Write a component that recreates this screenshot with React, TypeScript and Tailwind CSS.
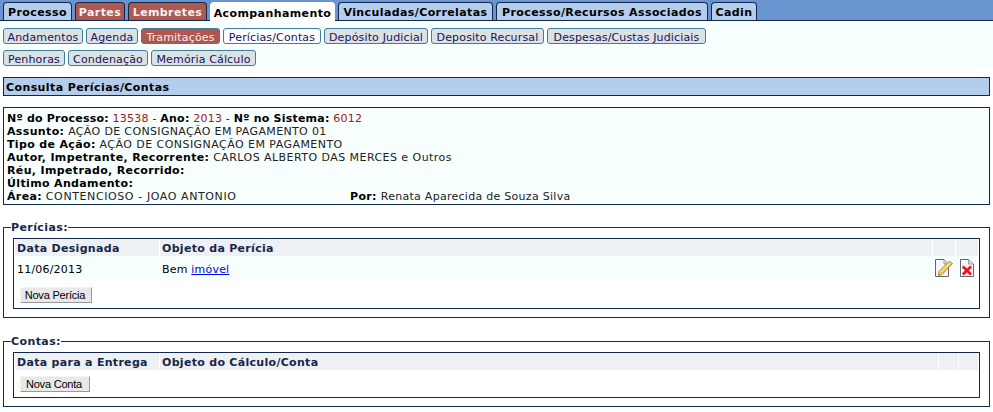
const mainTabs = [
  { label: 'Processo', w: 'w-[69px]', kind: 'plain' },
  { label: 'Partes', w: 'w-[50px]', kind: 'alert' },
  { label: 'Lembretes', w: 'w-[79px]', kind: 'alert' },
  { label: 'Acompanhamento', w: 'w-[125px]', kind: 'active' },
  { label: 'Vinculadas/Correlatas', w: 'w-[155px]', kind: 'plain' },
  { label: 'Processo/Recursos Associados', w: 'w-[212px]', kind: 'plain' },
  { label: 'Cadin', w: 'w-[46px]', kind: 'plain' },
];

const subTabsOne = [
  { label: 'Andamentos', w: 'w-[80px]', kind: 'plain' },
  { label: 'Agenda', w: 'w-[52px]', kind: 'plain' },
  { label: 'Tramitações', w: 'w-[79px]', kind: 'alert' },
  { label: 'Perícias/Contas', w: 'w-[98px]', kind: 'active' },
  { label: 'Depósito Judicial', w: 'w-[104px]', kind: 'plain' },
  { label: 'Deposito Recursal', w: 'w-[113px]', kind: 'plain' },
  { label: 'Despesas/Custas Judiciais', w: 'w-[159px]', kind: 'plain' },
];

const subTabsTwo = [
  { label: 'Penhoras', w: 'w-[62px]', kind: 'plain' },
  { label: 'Condenação', w: 'w-[80px]', kind: 'plain' },
  { label: 'Memória Cálculo', w: 'w-[105px]', kind: 'plain' },
];

function MainTab({ label, w, kind }: { label: string; w: string; kind: string }) {
  let colors = 'bg-[#b5cdec] text-black border-[#12284a] h-[18px]';
  if (kind === 'alert') colors = 'bg-[#ad5850] text-[#f7f3ee] border-[#12284a] h-[18px]';
  if (kind === 'active') colors = 'bg-white text-black border-white h-[19px] -mb-px';
  return (
    <div className={`${w} ${colors} shrink-0 border border-b-0 rounded-t-[4px] pt-[4px] flex items-center justify-center text-[11px] font-bold tracking-[0.4px]`}>
      {label}
    </div>
  );
}

function SubTab({ label, w, kind }: { label: string; w: string; kind: string }) {
  let colors = 'bg-[#dce1e4] text-[#14145a]';
  if (kind === 'alert') colors = 'bg-[#ad5850] text-[#f7ebe6]';
  if (kind === 'active') colors = 'bg-white text-[#14145a]';
  return (
    <div className={`${w} ${colors} h-4 shrink-0 border border-[#3f7d9c] rounded-[3px] pt-[4px] flex items-center justify-center text-[11px] tracking-[0.15px]`}>
      {label}
    </div>
  );
}

function InfoLabel({ children }: { children: React.ReactNode }) {
  return <b className="font-bold text-black">{children}</b>;
}

function EditIcon() {
  return (
    <svg width="19" height="19" viewBox="0 0 19 19">
      <path d="M0.5 0.5H9L13.5 5V17.5H0.5Z" fill="#f6f6f6" stroke="#666" />
      <path d="M9 0.5V5H13.5" fill="#ddd" stroke="#999" />
      <path d="M4 12.5L14.5 2L17.5 4.5L7 15.5L3.5 16.5Z" fill="#f3cd56" stroke="#a98a3c" />
      <path d="M5.5 13L15 3.5" stroke="#fbeeb0" />
    </svg>
  );
}

function DeleteIcon() {
  return (
    <svg width="14" height="19" viewBox="0 0 14 19">
      <path d="M0.5 0.5H8.5L13.5 5V17.5H0.5Z" fill="#f6f6f6" stroke="#666" />
      <path d="M8.5 0.5V5H13.5" fill="#ddd" stroke="#999" />
      <path d="M2.8 7.5L11 15.5M11 7.5L2.8 15.5" stroke="#f80a1e" strokeWidth="2.6" />
    </svg>
  );
}

function GridHead({ first, second, cols }: { first: string; second: string; cols: string[] }) {
  return (
    <div className="flex gap-px h-[17px] text-[11px] font-bold tracking-[0.3px] text-[#14294a] leading-[19px]">
      <div className="w-[144px] bg-[#eef0f3] pl-[2px]">{first}</div>
      <div className="flex-1 bg-[#eef0f3] pl-[2px]">{second}</div>
      {cols.map((w, i) => (
        <div key={i} className={`${w} bg-[#eef0f3]`} />
      ))}
    </div>
  );
}

function GridButton({ label, w }: { label: string; w: string }) {
  return (
    <button className={`${w} h-4 bg-[#e8e8e8] border border-t-[#f4f4f4] border-l-[#f4f4f4] border-r-[#999] border-b-[#999] font-['Liberation_Sans',sans-serif] text-[11px] tracking-[-0.2px] leading-none text-black pr-[2px]`}>
      {label}
    </button>
  );
}

export default function App() {
  return (
    <div className="w-[993px] h-[412px] overflow-hidden bg-white text-[11px] text-black font-['DejaVu_Sans',Verdana,sans-serif]">
      {/* abas principais */}
      <div className="h-[21px] bg-[#6a94d0] border-b border-[#12284a] flex items-end gap-[3px] pl-[3px]">
        {mainTabs.map((tab) => (
          <MainTab key={tab.label} {...tab} />
        ))}
      </div>

      {/* sub abas */}
      <div className="h-[47px] bg-[#f8ffff] pt-[7px] pl-[3px] flex flex-col gap-[6px]">
        <div className="flex gap-[3px]">
          {subTabsOne.map((tab) => (
            <SubTab key={tab.label} {...tab} />
          ))}
        </div>
        <div className="flex gap-[3px]">
          {subTabsTwo.map((tab) => (
            <SubTab key={tab.label} {...tab} />
          ))}
        </div>
      </div>

      <div className="px-[3px] pt-[9px]">
        <div className="h-[19px] bg-[#b5cdec] border border-[#12284a] pl-[2px] font-bold tracking-[0.4px] leading-[19px]">
          Consulta Perícias/Contas
        </div>

        <div className="mt-[11px] h-[98px] bg-[#f8ffff] border border-[#12284a] pl-[3px] pt-[4px] leading-[13px] text-[#222] tracking-[0.35px]">
          <div className="tracking-[0.22px]">
            <InfoLabel>Nº do Processo:</InfoLabel> <span className="text-[#a01818]">13538</span> - <InfoLabel>Ano:</InfoLabel>{' '}
            <span className="text-[#a01818]">2013</span> - <InfoLabel>Nº no Sistema:</InfoLabel> <span className="text-[#a01818]">6012</span>
          </div>
          <div><InfoLabel>Assunto:</InfoLabel> AÇÃO DE CONSIGNAÇÃO EM PAGAMENTO 01</div>
          <div><InfoLabel>Tipo de Ação:</InfoLabel> <span className="tracking-[0.45px]">AÇÃO DE CONSIGNAÇÃO EM PAGAMENTO</span></div>
          <div><InfoLabel>Autor, Impetrante, Recorrente:</InfoLabel> <span className="tracking-[0.45px]">CARLOS ALBERTO DAS MERCES e Outros</span></div>
          <div><InfoLabel>Réu, Impetrado, Recorrido:</InfoLabel></div>
          <div><InfoLabel>Último Andamento:</InfoLabel></div>
          <div className="flex">
            <div className="w-[343px]"><InfoLabel>Área:</InfoLabel> <span className="tracking-[0.6px]">CONTENCIOSO - JOAO ANTONIO</span></div>
            <div><InfoLabel>Por:</InfoLabel> <span className="tracking-[0.28px]">Renata Aparecida de Souza Silva</span></div>
          </div>
        </div>

        {/* perícias */}
        <fieldset className="mt-4 h-[97px] border border-[#0f3344] px-[9px]">
          <legend className="-ml-[2px] px-0 font-bold tracking-[0.4px] leading-[13px] text-[#14294a]">Perícias:</legend>
          <div className="mt-[4px] h-[71px] border border-[#12284a] px-px">
            <GridHead first="Data Designada" second="Objeto da Perícia" cols={['w-[22px]', 'w-[22px]']} />
            <div className="h-[24px] bg-[#f8ffff] flex items-start tracking-[0.2px]">
              <div className="w-[145px] pl-[2px] pt-[7px] leading-[13px]">11/06/2013</div>
              <div className="flex-1 pl-[2px] pt-[7px] leading-[13px]">
                Bem <a href="#" className="text-[#0000ee] underline">imóvel</a>
              </div>
              <div className="w-[23px] pl-[2px] pt-[3px]"><EditIcon /></div>
              <div className="w-[22px] pl-[4px] pt-[3px]"><DeleteIcon /></div>
            </div>
            <div className="pl-[5px] pt-[7px]">
              <GridButton label="Nova Perícia" w="w-[72px]" />
            </div>
          </div>
        </fieldset>

        {/* contas */}
        <fieldset className="mt-[17px] h-[72px] border border-[#0f3344] px-[9px]">
          <legend className="-ml-[2px] px-0 font-bold tracking-[0.4px] leading-[13px] text-[#14294a]">Contas:</legend>
          <div className="mt-[4px] h-[46px] border border-[#12284a] px-px">
            <GridHead first="Data para a Entrega" second="Objeto do Cálculo/Conta" cols={['w-[19px]', 'w-[19px]']} />
            <div className="pl-[5px] pt-[6px]">
              <GridButton label="Nova Conta" w="w-[70px]" />
            </div>
          </div>
        </fieldset>
      </div>
    </div>
  );
}
